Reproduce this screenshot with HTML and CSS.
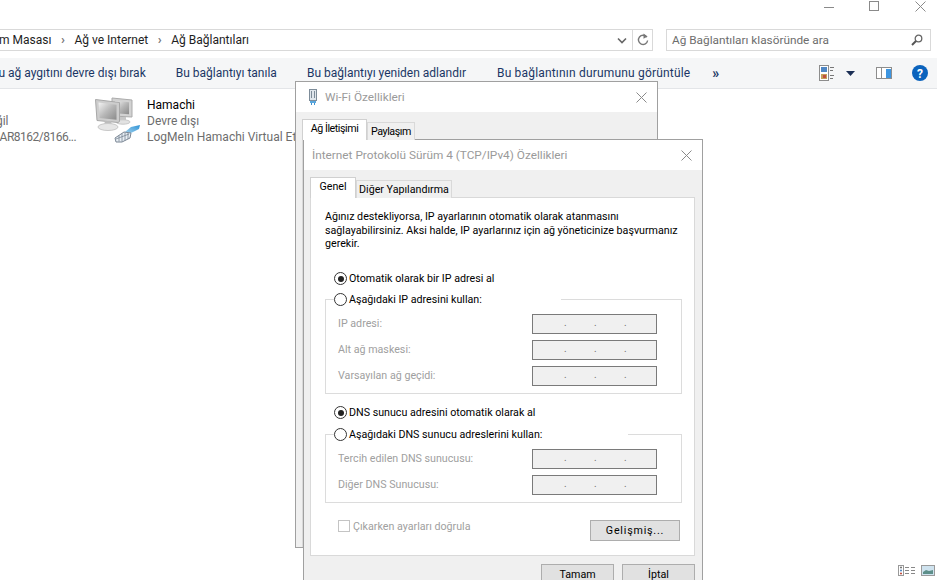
FILE: index.html
```html
<!DOCTYPE html>
<html lang="tr">
<head>
<meta charset="utf-8">
<title>Ağ Bağlantıları</title>
<link rel="stylesheet" href="styles.css">
</head>
<body>
<div class="explorer">
  <div class="titlebar">
    <svg class="wb" width="10" height="12" viewBox="0 0 10 12"><path d="M0 7.5h10" stroke="#8a8a8a" fill="none"/></svg>
    <svg class="wb" width="11" height="12" viewBox="0 0 11 12"><rect x=".5" y="1.5" width="9" height="9" stroke="#8a8a8a" fill="none"/></svg>
    <svg class="wb" width="11" height="12" viewBox="0 0 11 12"><path d="M.5 1.5l10 10M10.500 1.500l-10 10" stroke="#8a8a8a" fill="none"/></svg>
  </div>
  <div class="addressrow">
    <div class="addressbox">
      <div class="crumbs">
        <span class="crumb c1">Denetim Masası</span><span class="sep">›</span>
        <span class="crumb">Ağ ve Internet</span><span class="sep">›</span>
        <span class="crumb">Ağ Bağlantıları</span>
      </div>
      <svg class="chev" width="10" height="7" viewBox="0 0 10 7"><path d="M1 1.500l4 4 4-4" stroke="#666" stroke-width="1.600" fill="none"/></svg>
      <div class="refresh">
        <svg width="12" height="14" viewBox="0 0 12 14"><path d="M9.800 4.200A4.600 4.600 0 1 0 10.600 7.500" stroke="#777" stroke-width="1.400" fill="none"/><path d="M6.500 .5l4 3-4 2.200z" fill="#777"/></svg>
      </div>
    </div>
    <div class="searchbox">
      <span>Ağ Bağlantıları klasöründe ara</span>
      <svg width="12" height="12" viewBox="0 0 12 12"><circle cx="7.500" cy="4.500" r="3.300" stroke="#666" stroke-width="1.300" fill="none"/><path d="M5 7L1 11" stroke="#555" stroke-width="2"/></svg>
    </div>
  </div>
  <div class="commandbar">
    <span class="cmd first">Bu ağ aygıtını devre dışı bırak</span>
    <span class="cmd">Bu bağlantıyı tanıla</span>
    <span class="cmd">Bu bağlantıyı yeniden adlandır</span>
    <span class="cmd wide">Bu bağlantının durumunu görüntüle</span>
    <span class="more">»</span>
    <div class="cmdicons">
      <svg width="16" height="16" viewBox="0 0 16 16"><rect x=".5" y=".5" width="9" height="15" fill="#fff" stroke="#8d8d8d"/><rect x="2" y="2" width="6" height="5" fill="#4f87c4"/><rect x="2" y="9" width="6" height="5" fill="#c6a05a"/><rect x="4" y="10" width="3" height="3" fill="#c05040"/><path d="M11 2.500h4M11 5.500h3M11 10.500h4M11 13.500h3" stroke="#777"/></svg>
      <svg class="drop" width="9" height="5" viewBox="0 0 9 5"><path d="M0 0h9L4.500 5z" fill="#1b2f55"/></svg>
      <svg class="pane" width="16" height="12" viewBox="0 0 16 12"><rect x=".5" y=".5" width="15" height="11" fill="#fff" stroke="#8d8d8d"/><path d="M5.500 1v10" stroke="#8d8d8d"/><rect x="10" y="2" width="5" height="9" fill="#3d95e0"/></svg>
      <svg class="help" width="16" height="16" viewBox="0 0 16 16"><circle cx="8" cy="8" r="8" fill="#0b63bd"/><text x="8" y="12.500" class="helpq" text-anchor="middle">?</text></svg>
    </div>
  </div>
  <div class="content">
    <div class="item clipped">
      <div class="meta">
        <div class="name">Ethernet</div>
        <div class="sub status">Ağ kablosu takılı değil</div>
        <div class="sub adapter">Qualcomm Atheros AR8162/8166...</div>
      </div>
    </div>
    <div class="item">
      <svg class="netico" width="48" height="48" viewBox="0 0 48 48">
        <defs>
          <linearGradient id="scr" x1="0" y1="0" x2="1" y2="1"><stop offset="0" stop-color="#f4f4f4"/><stop offset=".5" stop-color="#b8b8b8"/><stop offset="1" stop-color="#8a8a8a"/></linearGradient>
          <linearGradient id="tip" x1="0" y1="1" x2="1" y2="0"><stop offset="0" stop-color="#9fd0ec"/><stop offset="1" stop-color="#2f93d6"/></linearGradient>
        </defs>
        <path d="M18 1l20 2v17l-20-1z" fill="#d2d2d2" stroke="#ababab"/>
        <path d="M21 4l14 1.200v12l-14-1z" fill="url(#scr)"/>
        <rect x="26" y="20" width="6" height="5" fill="#c6c6c6"/>
        <ellipse cx="29" cy="25" rx="7" ry="2.200" fill="#e2e2e2" stroke="#c8c8c8"/>
        <path d="M1.500 2.500l24 3v19l-1.500 1L3 23.500z" fill="#cdcdcd" stroke="#a8a8a8"/>
        <path d="M4.500 5.500l18 2.300v15L5.500 21z" fill="url(#scr)"/>
        <path d="M11 24h6l1 4h-8z" fill="#bcbcbc"/>
        <ellipse cx="14" cy="30" rx="10" ry="3.500" fill="#e6e6e6" stroke="#c8c8c8"/>
        <path d="M31 35l6-5 9-2-1 4-8 4z" fill="url(#tip)"/>
        <path d="M21 41l9-6 7 1-1 5-8 4h-6z" fill="#e8eef4" stroke="#7a8694"/>
        <path d="M25 38.500v6M28 36.500v8M31 35.500v8M34 36v6M22 42l13-5" stroke="#7a8694" stroke-width=".8" fill="none"/>
      </svg>
      <div class="meta">
        <div class="name">Hamachi</div>
        <div class="sub">Devre dışı</div>
        <div class="sub">LogMeIn Hamachi Virtual Ethernet Adapter</div>
      </div>
    </div>
  </div>
  <div class="statusbar">
    <svg width="18" height="11" viewBox="0 0 18 11"><rect x=".5" y=".5" width="5" height="10" fill="#fff" stroke="#999"/><rect x="2" y="1.700" width="2" height="1.600" fill="#777"/><rect x="2" y="4.700" width="2" height="1.600" fill="#4f87c4"/><rect x="2" y="7.700" width="2" height="1.600" fill="#c05040"/><path d="M7 2.500h4M13 2.500h4M7 5.500h4M13 5.500h4M7 8.500h4M13 8.500h4" stroke="#888"/></svg>
    <svg width="14" height="11" viewBox="0 0 14 11"><rect x=".5" y=".5" width="13" height="10" fill="#cfe3ef" stroke="#9a9a9a"/><path d="M2 7l3-2 3 1 4-1v4H2z" fill="#5d8f8a"/></svg>
  </div>
</div>

<div class="dialog wifi">
  <div class="dlgtitle">
    <svg class="wifiico" width="10" height="16" viewBox="0 0 10 16"><rect x="1.500" y=".5" width="7" height="11" fill="#dfe6ec" stroke="#7d8c99"/><path d="M3.500 2v7M6.500 2v7" stroke="#7d8c99"/><rect x="2" y="12" width="6" height="2" fill="#5aa7dd"/><path d="M3.500 14v2M6.500 14v2" stroke="#3f93d2"/></svg>
    <span class="dlgtext">Wi-Fi Özellikleri</span>
    <svg class="dlgclose" width="11" height="11" viewBox="0 0 11 11"><path d="M.5.500l10 10M10.500.500l-10 10" stroke="#8a8a8a" fill="none"/></svg>
  </div>
  <div class="dlgbody">
    <div class="tabs">
      <span class="tab active t-net">Ağ İletişimi</span>
      <span class="tab t-share">Paylaşım</span>
    </div>
    <div class="page wifipage"></div>
  </div>
</div>

<div class="dialog ipv4">
  <div class="dlgtitle">
    <span class="dlgtext">İnternet Protokolü Sürüm 4 (TCP/IPv4) Özellikleri</span>
    <svg class="dlgclose" width="11" height="11" viewBox="0 0 11 11"><path d="M.5.500l10 10M10.500.500l-10 10" stroke="#8a8a8a" fill="none"/></svg>
  </div>
  <div class="dlgbody ipbody">
    <div class="tabs">
      <span class="tab active t-gen">Genel</span>
      <span class="tab t-other">Diğer Yapılandırma</span>
    </div>
    <div class="page ippage">
      <p class="intro">Ağınız destekliyorsa, IP ayarlarının otomatik olarak atanmasını sağlayabilirsiniz. Aksi halde, IP ayarlarınız için ağ yöneticinize başvurmanız gerekir.</p>
      <div class="radiorow r1"><span class="radio on"></span><span>Otomatik olarak bir IP adresi al</span></div>
      <fieldset class="group">
        <legend class="grouplegend lg1"><span class="radio"></span><span>Aşağıdaki IP adresini kullan:</span></legend>
        <div class="field"><span>IP adresi:</span><span class="ipinput"><i>.</i><i>.</i><i>.</i></span></div>
        <div class="field"><span>Alt ağ maskesi:</span><span class="ipinput"><i>.</i><i>.</i><i>.</i></span></div>
        <div class="field"><span>Varsayılan ağ geçidi:</span><span class="ipinput"><i>.</i><i>.</i><i>.</i></span></div>
      </fieldset>
      <div class="radiorow r2"><span class="radio on"></span><span>DNS sunucu adresini otomatik olarak al</span></div>
      <fieldset class="group g2">
        <legend class="grouplegend lg2"><span class="radio"></span><span>Aşağıdaki DNS sunucu adreslerini kullan:</span></legend>
        <div class="field"><span>Tercih edilen DNS sunucusu:</span><span class="ipinput"><i>.</i><i>.</i><i>.</i></span></div>
        <div class="field"><span>Diğer DNS Sunucusu:</span><span class="ipinput"><i>.</i><i>.</i><i>.</i></span></div>
      </fieldset>
      <div class="pagefoot">
        <label class="check"><span class="box"></span><span class="checktext">Çıkarken ayarları doğrula</span></label>
        <span class="btn adv">Gelişmiş...</span>
      </div>
    </div>
    <div class="dlgbtns">
      <span class="btn main">Tamam</span>
      <span class="btn main">İptal</span>
    </div>
  </div>
</div>
</body>
</html>
```
FILE: styles.css
```css
* { box-sizing: border-box; }
html, body { margin: 0; height: 580px; overflow: hidden; background: #fff; }
body { font-family: Roboto, "Noto Sans", sans-serif; font-size: 12px; color: #000; position: relative; }

.explorer { height: 580px; display: flex; flex-direction: column; overflow: hidden; }
.titlebar { height: 29px; display: flex; justify-content: flex-end; align-items: flex-start; flex: none; padding-right: 11px; gap: 35px; }
.wb { display: block; }

.addressrow { height: 22px; display: flex; flex: none; padding-right: 6px; gap: 13px; }
.addressbox { width: 665px; margin-left: -12px; border: 1px solid #d9d9d9; border-left: 0; display: flex; align-items: center; flex: none; overflow: hidden; }
.crumbs { flex: 1; display: flex; align-items: center; white-space: nowrap; color: #1e1e1e; min-width: 0; }
.c1 { margin-left: -23px; }
.sep { color: #777; font-size: 13px; font-weight: 700; width: 23px; text-align: center; flex: none; line-height: 16px; }
.chev { margin-right: 5px; flex: none; }
.refresh { width: 20px; height: 20px; border-left: 1px solid #d9d9d9; display: flex; align-items: center; justify-content: center; flex: none; }
.searchbox { flex: 1; border: 1px solid #d9d9d9; display: flex; align-items: center; justify-content: space-between; padding: 0 7px 0 5px; color: #6d6d6d; font-size: 11.800px; }

.commandbar { height: 31px; margin-top: 7px; flex: none; background: #f5f6f7; border-bottom: 1px solid #e3e5e8; display: flex; align-items: center; color: #1b3665; white-space: nowrap; }
.cmd { margin-right: 30px; }
.cmd.first { margin-left: -9px; }
.cmd.wide { letter-spacing: .18px; margin-left: 1px; }
.more { font-size: 14px; font-weight: 700; line-height: 14px; margin-left: -8px; }
.cmdicons { margin-left: auto; display: flex; align-items: center; padding-right: 9px; }
.drop { margin-left: 11px; }
.pane { margin-left: 21px; }
.help { margin-left: 20px; }
.helpq { font: 700 12px Roboto, sans-serif; fill: #fff; }

.content { flex: 1; display: flex; padding-top: 8px; overflow: hidden; }
.item { display: flex; flex: none; white-space: nowrap; }
.clipped { width: 94px; }
.clipped .meta { margin-left: -98px; }
.status { margin-left: -10px; }
.adapter { letter-spacing: -.5px; }
.netico { flex: none; margin-right: 5px; }
.name { line-height: 16px; color: #000; }
.sub { line-height: 16px; color: #6d6d6d; }
.meta { flex: none; }

.statusbar { flex: none; display: flex; gap: 5px; justify-content: flex-end; align-items: center; height: 17px; padding: 0 2px 3px 0; }

.dialog { position: absolute; background: #fff; border: 1px solid #a0a0a0; display: flex; flex-direction: column; font-size: 10.700px; }
.wifi { left: 295px; top: 81px; width: 363px; height: 467px; }
.ipv4 { left: 303px; top: 139px; width: 400px; height: 460px; }
.dlgtitle { height: 30px; flex: none; display: flex; align-items: center; padding-left: 8px; color: #9a9a9a; font-size: 11.800px; }
.wifiico { margin: 0 7px 0 4px; flex: none; }
.dlgtext { flex: 1; white-space: nowrap; }
.dlgclose { margin-right: 10px; flex: none; }
.dlgbody { flex: 1; background: #f0f0f0; padding: 7px 7px 0 6px; display: flex; flex-direction: column; }

.tabs { display: flex; align-items: flex-end; height: 21px; flex: none; position: relative; z-index: 1; margin-bottom: -1px; }
.tab { height: 18px; background: #f0f0f0; border: 1px solid #d9d9d9; border-bottom: 0; line-height: 17px; white-space: nowrap; text-align: center; }
.tab.active { height: 21px; background: #fff; line-height: 18px; border-color: #d0d0d0; }
.t-net { width: 65px; letter-spacing: -.45px; }
.t-share { width: 48px; letter-spacing: -.45px; }
.t-gen { width: 46px; }
.t-other { width: 96px; }
.page { background: #fff; border: 1px solid #d9d9d9; }
.wifipage { flex: 1; }
.ippage { padding: 12px 12px 14px 14px; }
.intro { margin: 0; line-height: 13.500px; width: 365px; }

.radiorow { display: flex; align-items: center; height: 16px; }
.r1 { margin: 20px 0 5px 9px; }
.r2 { margin: 11px 0 6px 9px; }
.radio { width: 13px; height: 13px; border-radius: 50%; border: 1px solid #333; background: #fff; margin-right: 2px; flex: none; position: relative; display: inline-block; }
.radio.on::after { content: ""; position: absolute; left: 2.500px; top: 2.500px; width: 6px; height: 6px; border-radius: 50%; background: #222; }

.group { margin: 0; border: 1px solid #dcdcdc; padding: 6px 24px 7px 12px; min-width: 0; width: 357px; display: flex; flex-direction: column; gap: 6px; }
.grouplegend { padding: 0; margin-left: -4px; height: 16px; display: flex; align-items: center; white-space: nowrap; }
.lg1 { width: 227px; }
.lg2 { width: 294px; }
.field { height: 20px; display: flex; align-items: center; justify-content: space-between; color: #a0a0a0; }
.ipinput { width: 125px; height: 20px; background: #f0f0f0; border: 1px solid #7a7a7a; display: flex; justify-content: flex-start; padding-left: 31px; gap: 28px; color: #707070; line-height: 16px; }
.ipinput i { font-style: normal; width: 2px; font-size: 10px; }

.pagefoot { display: flex; align-items: flex-start; justify-content: space-between; margin: 17px 1px 0 0; width: 355px; padding-left: 13px; }
.check { display: flex; align-items: flex-start; color: #a0a0a0; gap: 3px; }
.checktext { line-height: 13px; }
.box { width: 12px; height: 12px; border: 1px solid #c4c4c4; background: #fff; flex: none; }
.btn { display: block; background: #e1e1e1; border: 1px solid #adadad; color: #000; text-align: center; }
.adv { width: 90px; height: 21px; line-height: 19px; letter-spacing: .8px; }
.dlgbtns { display: flex; justify-content: flex-end; gap: 8px; margin-top: 8px; }
.main { width: 73px; height: 22px; line-height: 20px; }
```
